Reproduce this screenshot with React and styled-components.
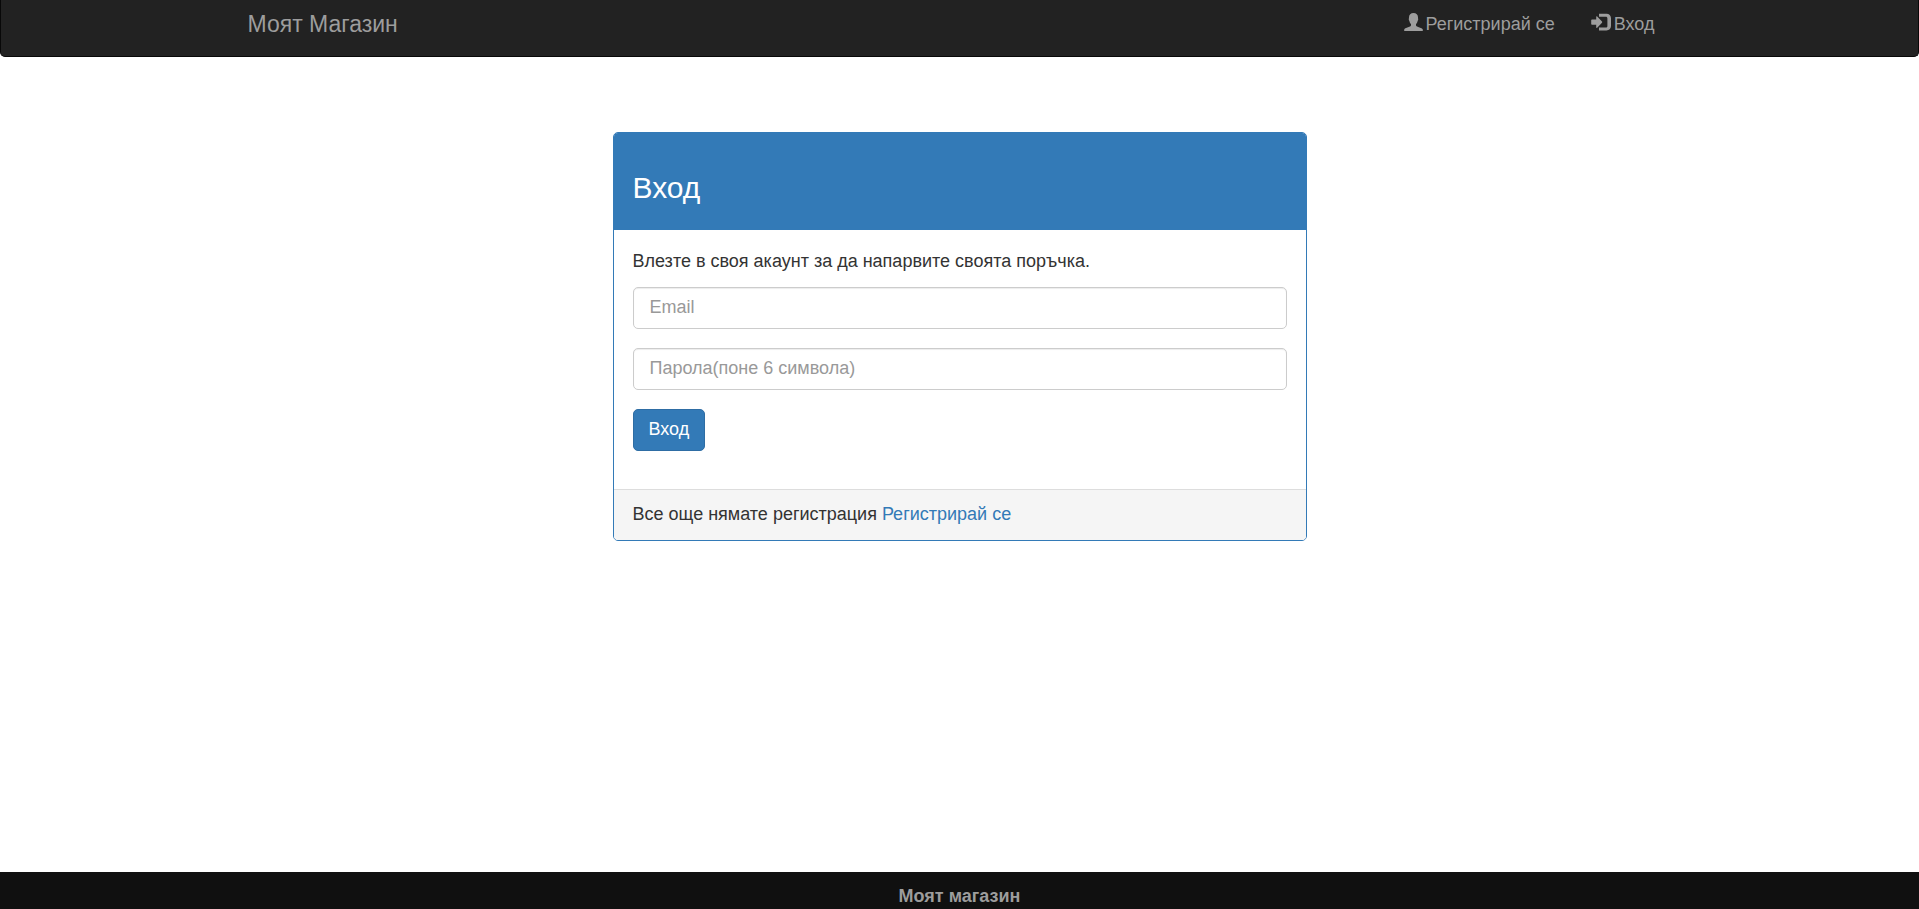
import React from "react";
import styled, { createGlobalStyle } from "styled-components";

const GlobalStyle = createGlobalStyle`
  *, *::before, *::after { box-sizing: border-box; }
  body {
    margin: 0;
    background: #fff;
    color: #333;
    font-family: "Liberation Sans", Arial, sans-serif;
    font-size: 18px;
    line-height: 25px;
  }
`;

const Page = styled.div`
  min-height: 100vh;
  display: flex;
  flex-direction: column;
`;

const Navbar = styled.nav`
  background: #222;
  border: 1px solid #080808;
  border-top: 0;
  border-radius: 0 0 5px 5px;
`;

const NavContainer = styled.div`
  max-width: 1462px;
  margin: 0 auto;
  padding: 12px 19px 19px;
  display: flex;
  justify-content: space-between;
  align-items: flex-start;
`;

const Brand = styled.a`
  color: #9d9d9d;
  font-size: 23px;
  text-decoration: none;
`;

const NavList = styled.ul`
  list-style: none;
  margin: 0;
  padding: 0 17px 0 0;
  display: flex;
  gap: 36px;
`;

const NavLink = styled.a`
  display: flex;
  gap: 3px;
  color: #9d9d9d;
  text-decoration: none;
`;

const NavIcon = styled.svg`
  width: ${(p) => p.$width}px;
  height: 18px;
  margin-top: 1px;
  fill: currentColor;
`;

const Main = styled.main`
  flex: 1;
  padding: 75px 19px;
`;

const Panel = styled.section`
  max-width: 694px;
  margin: 0 auto;
  border: 1px solid #337ab7;
  border-radius: 5px;
  overflow: hidden;
`;

const PanelHeading = styled.header`
  background: #337ab7;
  color: #fff;
  padding: 38px 19px 25px;
`;

const PanelTitle = styled.h1`
  margin: 0;
  font-size: 30px;
  font-weight: 400;
  line-height: 34px;
`;

const PanelBody = styled.div`
  padding: 19px 19px 38px;
`;

const Intro = styled.p`
  margin: 0 0 13px;
`;

const Form = styled.form`
  display: flex;
  flex-direction: column;
  align-items: flex-start;
  gap: 19px;
`;

const Field = styled.input`
  display: block;
  width: 100%;
  height: 42px;
  padding: 7px 16px 8px;
  border: 1px solid #ccc;
  border-radius: 5px;
  background: #fff;
  box-shadow: inset 0 1px 1px rgba(0, 0, 0, 0.075);
  color: #555;
  font: inherit;

  &::placeholder {
    color: #999;
    opacity: 1;
  }
`;

const SubmitButton = styled.button`
  height: 42px;
  padding: 7px 15px 8px;
  border: 1px solid #2e6da4;
  border-radius: 5px;
  background: #337ab7;
  color: #fff;
  font: inherit;
  line-height: 25px;
  cursor: pointer;
`;

const PanelFooter = styled.footer`
  padding: 12px 19px 13px;
  background: #f5f5f5;
  border-top: 1px solid #ddd;
`;

const TextLink = styled.a`
  color: #337ab7;
  text-decoration: none;
`;

const SiteFooter = styled.footer`
  padding: 12px 19px 0;
  background: #101010;
  color: #9d9d9d;
  font-weight: 700;
  text-align: center;
`;

function UserIcon() {
  return (
    <NavIcon $width={19} viewBox="0 0 19 18" aria-hidden="true">
      <path d="M9.500 0C6.700 0 5 1.800 5 4.300c0 1-.2 1.400-.2 2.200 0 .8.4 1 .6 1.500.3 1.300.7 2.200 1.600 3v1.200c0 .6-.4.900-1 1.200l-4.600 1.900C.7 15.700.2 16.100.2 17v1h18.600v-1c0-.9-.5-1.300-1.400-1.700L13 13.400c-.6-.3-1-.6-1-1.200V11c.9-.8 1.300-1.700 1.600-3 .2-.5.6-.7.6-1.500 0-.8-.2-1.200-.2-2.200C14 1.800 12.300 0 9.500 0Z" />
    </NavIcon>
  );
}

function LoginIcon() {
  return (
    <NavIcon $width={20} viewBox="0 0 20 18" aria-hidden="true">
      <path d="M8 .8h7.500C18.100.8 20 2.700 20 5.200v7.900c0 2.500-1.900 4.400-4.500 4.400H8v-3h6.800c1 0 1.600-.6 1.600-1.600V5.400c0-1-.6-1.600-1.600-1.600H8Z" />
      <path d="M.2 7.300c0-.5.3-.8.8-.8h4.200V3.900c0-.6.500-.8 1-.4l4.800 5c.3.4.3.800 0 1.200l-4.800 5c-.5.4-1 .2-1-.4v-2.600H1c-.5 0-.8-.3-.8-.8Z" />
    </NavIcon>
  );
}

export default function App() {
  return (
    <>
      <GlobalStyle />
      <Page>
        <Navbar>
          <NavContainer>
            <Brand href="#home">Моят Магазин</Brand>
            <NavList>
              <li>
                <NavLink href="#register">
                  <UserIcon />
                  Регистрирай се
                </NavLink>
              </li>
              <li>
                <NavLink href="#login">
                  <LoginIcon />
                  Вход
                </NavLink>
              </li>
            </NavList>
          </NavContainer>
        </Navbar>
        <Main>
          <Panel>
            <PanelHeading>
              <PanelTitle>Вход</PanelTitle>
            </PanelHeading>
            <PanelBody>
              <Intro>Влезте в своя акаунт за да напарвите своята поръчка.</Intro>
              <Form onSubmit={(e) => e.preventDefault()}>
                <Field type="email" name="email" placeholder="Email" aria-label="Email" />
                <Field
                  type="password"
                  name="password"
                  placeholder="Парола(поне 6 символа)"
                  aria-label="Парола(поне 6 символа)"
                />
                <SubmitButton type="submit">Вход</SubmitButton>
              </Form>
            </PanelBody>
            <PanelFooter>
              Все още нямате регистрация <TextLink href="#register">Регистрирай се</TextLink>
            </PanelFooter>
          </Panel>
        </Main>
        <SiteFooter>Моят магазин</SiteFooter>
      </Page>
    </>
  );
}
